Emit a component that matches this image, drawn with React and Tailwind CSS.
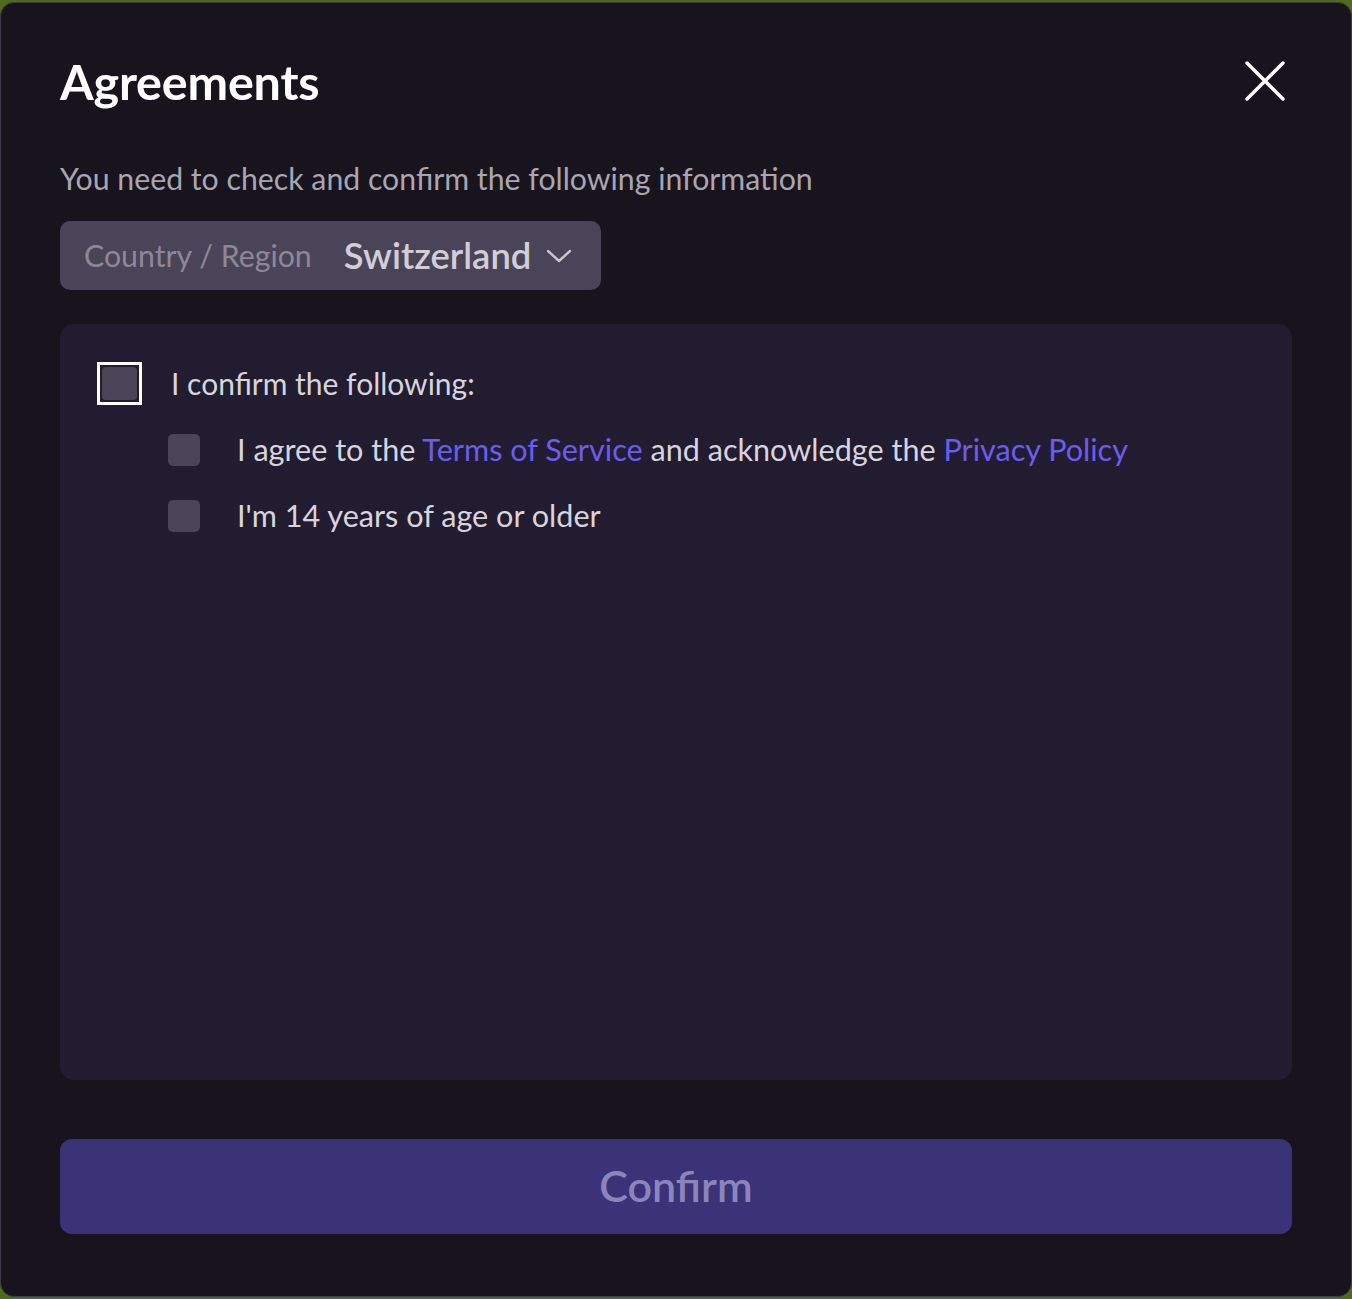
import { useState } from 'react';

function SmallBox({ checked, onToggle }) {
  return (
    <button
      type="button"
      onClick={onToggle}
      className="w-[32px] h-[32px] shrink-0 rounded-[5px] bg-[#4a4458]"
    >
      {checked && <span className="block w-full h-full rounded-[5px] bg-[#6b5cf0]" />}
    </button>
  );
}

export default function App() {
  const [all, setAll] = useState(false);
  const [terms, setTerms] = useState(false);
  const [age, setAge] = useState(false);

  return (
    <div
      className="w-[1352px] h-[1299px] bg-[#4f6a18] pt-[2px] pb-[2px]"
      style={{ fontFamily: 'Lato, "Noto Sans", sans-serif' }}
    >
      <div className="h-full rounded-[14px] border border-[#3e3a4c] bg-[#17141e] px-[59px] pt-[47px] flex flex-col">
        {/* Header */}
        <div className="flex items-center justify-between h-[62px]">
          <h1 className="text-[48.5px] font-bold text-white tracking-[-0.2px] leading-none">Agreements</h1>
          <button type="button" className="mr-[6px] p-[1px]">
            <svg width="40" height="40" viewBox="0 0 40 40" fill="none" stroke="white" strokeWidth="3.4" strokeLinecap="round">
              <path d="M2 2 L38 38 M38 2 L2 38" />
            </svg>
          </button>
        </div>

        <p className="mt-[46px] text-[30.25px] leading-[40px] text-[#a9a5b1]">
          You need to check and confirm the following information
        </p>

        {/* Country select */}
        <div className="mt-[23px] w-[541px] h-[69px] rounded-[10px] bg-[#4a4458] flex items-center pl-[24px]">
          <span className="text-[30.3px] text-[#8d8898]">Country / Region</span>
          <span className="ml-[32px] text-[36.4px] font-semibold text-[#d2ced8]">Switzerland</span>
          <svg className="ml-[15px]" width="26" height="16" viewBox="0 0 26 16" fill="none" stroke="#c9c5cf" strokeWidth="2.4" strokeLinecap="round" strokeLinejoin="round">
            <path d="M2 3 L13 13 L24 3" />
          </svg>
        </div>

        {/* Agreement panel */}
        <div className="mt-[34px] h-[756px] rounded-[14px] bg-[#221c30] pt-[37px] pl-[37px]">
          <div className="flex items-center">
            <button
              type="button"
              onClick={() => {
                const v = !all;
                setAll(v);
                setTerms(v);
                setAge(v);
              }}
              className="w-[45px] h-[43px] shrink-0 border-[3px] border-white p-[2px]"
            >
              <span className={`block w-full h-full rounded-[4px] ${all ? 'bg-[#6b5cf0]' : 'bg-[#4a4458]'}`} />
            </button>
            <span className="ml-[29px] text-[30px] text-[#d8d4dd]">I confirm the following:</span>
          </div>

          <div className="mt-[28px] pl-[71px] flex flex-col gap-[34px]">
            <div className="flex items-center h-[32px]">
              <SmallBox checked={terms} onToggle={() => setTerms(!terms)} />
              <span className="ml-[37px] text-[30.6px] text-[#d8d4dd] whitespace-nowrap">
                I agree to the <span className="text-[#6b5cf0]">Terms of Service</span> and acknowledge the{' '}
                <span className="text-[#6b5cf0]">Privacy Policy</span>
              </span>
            </div>
            <div className="flex items-center h-[32px]">
              <SmallBox checked={age} onToggle={() => setAge(!age)} />
              <span className="ml-[37px] text-[30.6px] text-[#d8d4dd] whitespace-nowrap">I'm 14 years of age or older</span>
            </div>
          </div>
        </div>

        {/* Confirm button */}
        <button
          type="button"
          className="mt-[59px] h-[95px] w-full rounded-[12px] bg-[#3b3277] text-[43px] font-semibold text-[#8c85bd]"
        >
          Confirm
        </button>
      </div>
    </div>
  );
}
